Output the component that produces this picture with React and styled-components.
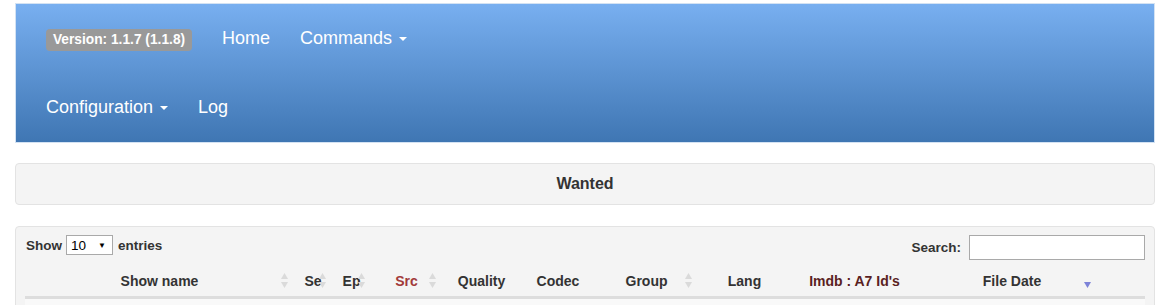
import styled, { createGlobalStyle } from "styled-components";

const GlobalStyle = createGlobalStyle`
  body {
    margin: 0;
    background: #fff;
    font-family: "Liberation Sans", Arial, sans-serif;
    color: #333;
  }
`;

const Page = styled.div`
  padding: 3px 14px 0 15px;
  height: 302px;
  overflow: hidden;
`;

const Navbar = styled.nav`
  border: 1px solid #d3e2f3;
  background: linear-gradient(to bottom, #78aff0 0%, #3f76b3 100%);
  padding-left: 30px;
`;

const NavRow = styled.div`
  display: flex;
  align-items: center;
  height: 69px;
`;

const Badge = styled.span`
  display: inline-block;
  box-sizing: border-box;
  width: 146px;
  text-align: center;
  background: #999;
  color: #fff;
  font-size: 13.75px;
  font-weight: bold;
  line-height: 16px;
  padding: 3px 0;
  border-radius: 4px;
  margin-right: 15px;
  margin-top: 3px;
`;

const NavLink = styled.a`
  color: #fff;
  font-size: 18px;
  line-height: 20px;
  padding: 0 15px 2px;
  text-decoration: none;
  display: flex;
  align-items: center;
  &:first-child {
    padding-left: 0;
  }
`;

const Caret = styled.span`
  display: inline-block;
  width: 0;
  height: 0;
  margin-left: 7px;
  margin-top: 2px;
  border-top: 4px solid #fff;
  border-left: 4px solid transparent;
  border-right: 4px solid transparent;
`;

const Panel = styled.div`
  background: #f4f4f4;
  border: 1px solid #e3e3e3;
  border-radius: 4px;
`;

const TitlePanel = styled(Panel)`
  margin-top: 20px;
  height: 40px;
  line-height: 40px;
  text-align: center;
  font-size: 16px;
  font-weight: bold;
  color: #333;
`;

const TablePanel = styled(Panel)`
  margin-top: 21px;
  padding: 8px 9px 0 9px;
  height: 120px;
`;

const Toolbar = styled.div`
  display: flex;
  justify-content: space-between;
  align-items: flex-start;
  height: 25px;
  font-size: 13.5px;
  font-weight: bold;
  color: #333;
`;

const LengthBox = styled.label`
  display: flex;
  align-items: center;
  gap: 4px;
  height: 20px;
  padding-left: 1px;
`;

const SelectBox = styled.span`
  display: flex;
  align-items: center;
  justify-content: space-between;
  box-sizing: border-box;
  width: 47px;
  height: 20px;
  border: 1px solid #a9a9a9;
  background: #fff;
  font-weight: normal;
  font-size: 13.5px;
  color: #000;
  padding: 0 6px 0 4px;
  margin-right: 1px;
`;

const Arrow = styled.span`
  font-size: 8px;
`;

const SearchBox = styled.label`
  display: flex;
  align-items: center;
  gap: 8px;
  height: 25px;
`;

const SearchInput = styled.input`
  box-sizing: border-box;
  width: 176px;
  height: 25px;
  border: 1px solid #a9a9a9;
  background: #fff;
  margin: 0;
`;

const HeadRow = styled.div`
  display: grid;
  grid-template-columns: 269px 38px 39px 71px 79px 74px 103px 93px 127px 179px 48px;
  border-bottom: 3px solid #ddd;
`;

const HeadCell = styled.div`
  position: relative;
  text-align: center;
  white-space: nowrap;
  font-size: 14px;
  font-weight: bold;
  line-height: 16px;
  padding: 13px 0 7px ${(p) => p.$shift || 0}px;
  color: ${(p) => p.$color || "#333"};
`;

const SortIcon = styled.svg`
  position: absolute;
  right: 6px;
  top: 13px;
`;

const BodyRow = styled.div`
  height: 20px;
  background: #f9f9f9;
`;

function Sort({ dir }) {
  if (dir === "desc") {
    return (
      <SortIcon width="7" height="16" viewBox="0 0 7 16">
        <polygon points="0,9 7,9 3.5,15" fill="#7d83d8" />
      </SortIcon>
    );
  }
  return (
    <SortIcon width="7" height="16" viewBox="0 0 7 16">
      <polygon points="0,6 7,6 3.5,0" fill="#dadada" />
      <polygon points="0,9 7,9 3.5,15" fill="#dadada" />
    </SortIcon>
  );
}

const columns = [
  { label: "Show name", sort: "both" },
  { label: "Se", sort: "both" },
  { label: "Ep", sort: "both" },
  { label: "Src", sort: "both", color: "#a23a3a" },
  { label: "Quality" },
  { label: "Codec" },
  { label: "Group", sort: "both" },
  { label: "Lang" },
  { label: "Imdb : A7 Id's", color: "#5a1f1f" },
  { label: "File Date", sort: "desc", shift: 9 },
  { label: "" },
];

export default function App() {
  return (
    <Page>
      <GlobalStyle />
      <Navbar>
        <NavRow>
          <Badge>Version: 1.1.7 (1.1.8)</Badge>
          <NavLink href="#">Home</NavLink>
          <NavLink href="#">
            Commands<Caret />
          </NavLink>
        </NavRow>
        <NavRow>
          <NavLink href="#">
            Configuration<Caret />
          </NavLink>
          <NavLink href="#">Log</NavLink>
        </NavRow>
      </Navbar>

      <TitlePanel>Wanted</TitlePanel>

      <TablePanel>
        <Toolbar>
          <LengthBox>
            Show
            <SelectBox>
              10<Arrow>▼</Arrow>
            </SelectBox>
            entries
          </LengthBox>
          <SearchBox>
            Search:
            <SearchInput type="search" />
          </SearchBox>
        </Toolbar>
        <HeadRow>
          {columns.map((c, i) => (
            <HeadCell key={i} $color={c.color} $shift={c.shift}>
              {c.label}
              {c.sort && <Sort dir={c.sort} />}
            </HeadCell>
          ))}
        </HeadRow>
        <BodyRow />
      </TablePanel>
    </Page>
  );
}
